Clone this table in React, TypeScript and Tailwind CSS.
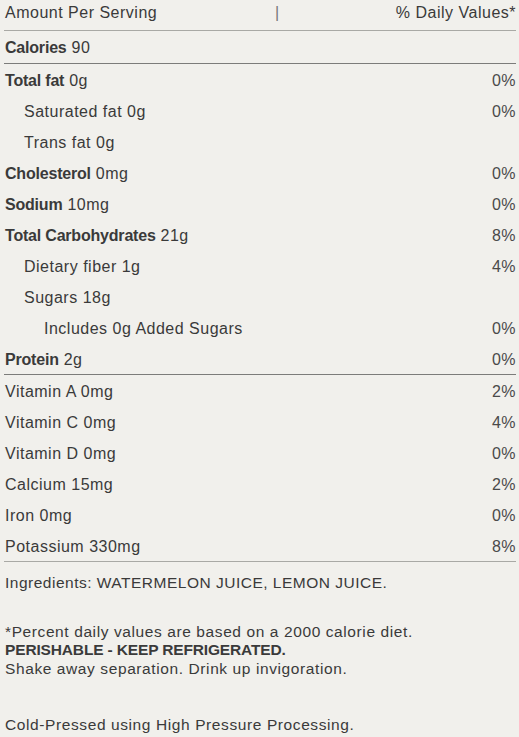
const font = { fontFamily: '"Liberation Sans", Arial, sans-serif' };

type Row = {
  label: string;
  amount: string;
  pct?: string;
  bold?: boolean;
  indent?: 0 | 1 | 2;
};

const macros: Row[] = [
  { label: "Total fat", amount: "0g", pct: "0%", bold: true },
  { label: "Saturated fat", amount: "0g", pct: "0%", indent: 1 },
  { label: "Trans fat", amount: "0g", indent: 1 },
  { label: "Cholesterol", amount: "0mg", pct: "0%", bold: true },
  { label: "Sodium", amount: "10mg", pct: "0%", bold: true },
  { label: "Total Carbohydrates", amount: "21g", pct: "8%", bold: true },
  { label: "Dietary fiber", amount: "1g", pct: "4%", indent: 1 },
  { label: "Sugars", amount: "18g", indent: 1 },
  { label: "Includes 0g Added Sugars", amount: "", pct: "0%", indent: 2 },
  { label: "Protein", amount: "2g", pct: "0%", bold: true },
];

const vitamins: Row[] = [
  { label: "Vitamin A", amount: "0mg", pct: "2%" },
  { label: "Vitamin C", amount: "0mg", pct: "4%" },
  { label: "Vitamin D", amount: "0mg", pct: "0%" },
  { label: "Calcium", amount: "15mg", pct: "2%" },
  { label: "Iron", amount: "0mg", pct: "0%" },
  { label: "Potassium", amount: "330mg", pct: "8%" },
];

function NutrientRow({ row }: { row: Row }) {
  const pad = row.indent === 2 ? "pl-[40px]" : row.indent === 1 ? "pl-[20px]" : "pl-px";
  return (
    <div className={`flex h-[31px] items-center justify-between pt-[3px] pr-0 ${pad}`}>
      <span>
        {row.bold ? <span className="font-bold tracking-[-0.2px]">{row.label}</span> : row.label}
        {row.amount ? " " + row.amount : ""}
      </span>
      {row.pct && <span className="text-[#4a4a4a]">{row.pct}</span>}
    </div>
  );
}

export default function App() {
  return (
    <div className="min-h-[737px] w-[519px] bg-[#f1f0ec] text-[16px] tracking-[0.5px] text-[#3a3a3a]" style={font}>
      <div className="pl-[4px] pr-[3px]">
        <div className="flex h-[30px] items-start pt-[1px] pl-px">
          <span className="w-[270px]">Amount Per Serving</span>
          <span className="text-[#777]">|</span>
          <span className="ml-auto">% Daily Values*</span>
        </div>
        <div className="h-px bg-[#a9a9a5]" />
        <div className="flex h-[32px] items-center pt-[1px] pl-px">
          <span className="font-bold tracking-[-0.2px]">Calories</span>&nbsp;90
        </div>
        <div className="h-px bg-[#7c7c7a]" />
        {macros.map((r) => (
          <NutrientRow key={r.label} row={r} />
        ))}
        <div className="h-px bg-[#7c7c7a]" />
        {vitamins.map((r) => (
          <NutrientRow key={r.label} row={r} />
        ))}
        <div className="h-px bg-[#a9a9a5]" />
      </div>
      <div className="pl-[5px] pt-[12px] text-[15.5px] leading-[18.5px] tracking-[0.6px]">
        <p className="tracking-[0.5px]">Ingredients: WATERMELON JUICE, LEMON JUICE.</p>
        <p className="mt-[30px]">*Percent daily values are based on a 2000 calorie diet.</p>
        <p className="font-bold tracking-[-0.15px]">PERISHABLE - KEEP REFRIGERATED.</p>
        <p>Shake away separation. Drink up invigoration.</p>
        <p className="mt-[38px]">Cold-Pressed using High Pressure Processing.</p>
      </div>
    </div>
  );
}
